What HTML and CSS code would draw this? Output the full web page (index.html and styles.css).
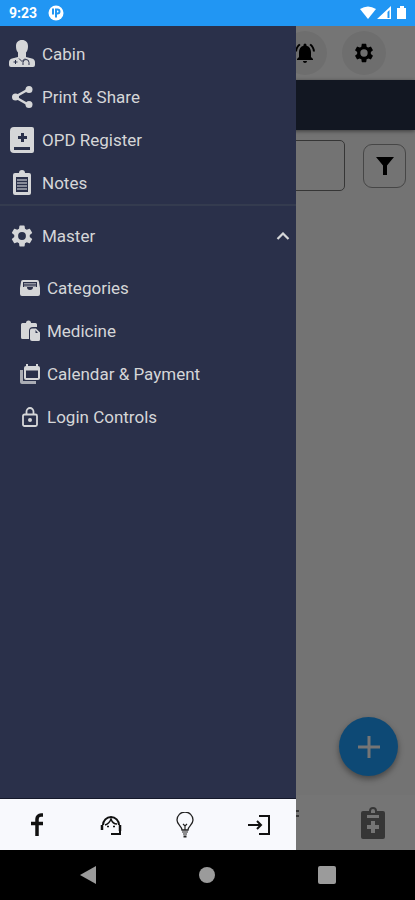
FILE: index.html
```html
<!DOCTYPE html>
<html lang="en">
<head>
<meta charset="UTF-8" />
<meta name="viewport" content="width=device-width, initial-scale=1" />
<title>Clinic Menu</title>
<link rel="stylesheet" href="styles.css">
</head>
<body>

<div class="statusbar">
  <span class="clock">9:23</span>
  <svg width="16" height="16" viewBox="0 0 16 16"><circle cx="8" cy="8" r="7.500" fill="#fff"/><path d="M5 3.500v6M8 12.500V4.500h1.500a2 2 0 0 1 0 4H8" fill="none" stroke="#2196f3" stroke-width="2"/></svg>
  <svg class="signals" width="48" height="16" viewBox="0 0 48 16" fill="#fff">
    <path d="M0 4Q8-1 16 4L8 14z"/>
    <path d="M31 1v13H17zM27.500 7v6h2V5z" fill-rule="evenodd"/>
    <path d="M40 1h4v2h2v11h-9V3h3z"/>
  </svg>
</div>

<div class="app">
  <div class="page">
    <header class="topbar">
      <button class="round" aria-label="Notifications">
        <svg width="24" height="24" viewBox="0 0 24 24"><path d="M12 22c1.100 0 2-.9 2-2h-4c0 1.100.9 2 2 2zm6-6v-5c0-3.070-1.630-5.640-4.500-6.320V4a1.500 1.500 0 0 0-3 0v.68C7.640 5.360 6 7.920 6 11v5l-2 2v1h16v-1zM7.580 4.080 6.150 2.650C3.750 4.480 2.170 7.300 2.030 10.500h2c.15-2.650 1.510-4.970 3.550-6.420zM19.970 10.500h2c-.15-3.200-1.730-6.020-4.120-7.850l-1.420 1.430c2.020 1.450 3.390 3.770 3.540 6.420z"/></svg>
      </button>
      <button class="round" aria-label="Settings">
        <svg width="22" height="22" viewBox="0 0 24 24"><path d="M19.430 12.980c.04-.32.07-.64.07-.98s-.03-.66-.07-.98l2.110-1.650c.19-.15.24-.42.12-.64l-2-3.460a.5.5 0 0 0-.61-.22l-2.490 1a7.300 7.300 0 0 0-1.690-.98l-.38-2.650A.49.490 0 0 0 14 2h-4c-.25 0-.46.18-.49.42l-.38 2.650c-.61.25-1.170.59-1.690.98l-2.490-1a.5.5 0 0 0-.61.22l-2 3.460c-.13.22-.07.49.12.64l2.110 1.650a7.900 7.900 0 0 0 0 1.960l-2.110 1.650c-.19.15-.24.42-.12.64l2 3.460c.12.22.39.3.61.22l2.490-1c.52.4 1.080.73 1.690.98l.38 2.650c.03.24.24.42.49.42h4c.25 0 .46-.18.49-.42l.38-2.650c.61-.25 1.170-.59 1.690-.98l2.490 1c.23.09.49 0 .61-.22l2-3.460a.5.5 0 0 0-.12-.64zM12 16a4 4 0 1 1 0-8 4 4 0 0 1 0 8z" fill-rule="evenodd"/></svg>
      </button>
    </header>
    <div class="band"></div>
    <div class="search-row">
      <input class="search" type="text" aria-label="Search" />
      <button class="filter" aria-label="Filter">
        <svg width="20" height="20" viewBox="0 0 20 20"><path d="M1 1h18l-7 8.500V19H8V9.500z"/></svg>
      </button>
    </div>
    <button class="fab" aria-label="Add">
      <svg width="22" height="22" viewBox="0 0 22 22"><path d="M11 0v22M0 11h22" stroke="#fff" stroke-width="3"/></svg>
    </button>
    <div class="tabs">
      <a href="#" aria-label="List">
        <svg width="24" height="32" viewBox="0 0 24 32"><path d="M0 4h24M0 9h24" stroke="#777" stroke-width="2"/></svg>
      </a>
      <a href="#" aria-label="Prescriptions">
        <svg width="24" height="32" viewBox="0 0 24 32" fill="#777"><path d="M2 4h6a4 4 0 0 1 8 0h6a2 2 0 0 1 2 2v24a2 2 0 0 1-2 2H2a2 2 0 0 1-2-2V6a2 2 0 0 1 2-2zm10-2a2 2 0 0 0-2 2v2h4V4a2 2 0 0 0-2-2zM6 8v3h12V8zm4 6v4H6v4h4v4h4v-4h4v-4h-4v-4z" fill-rule="evenodd"/></svg>
      </a>
    </div>
  </div>

  <div class="scrim"></div>

  <aside class="drawer">
    <nav class="menu">
      <a class="item" href="#">
        <svg width="26" height="28" viewBox="0 0 26 28"><path d="M13 0c3.800 0 6 2.500 6 6 0 3-.5 5-2 6.500V17l6 1.500c2 .5 3 2 3 4V25a2 2 0 0 1-2 2H2a2 2 0 0 1-2-2v-2.500c0-2 1-3.500 3-4L9 17v-4.500C7.500 11 7 9 7 6c0-3.500 2.200-6 6-6z"/><path d="M6.500 20v4M4.500 22h4M10 18.500l3 3 3-3" fill="none" stroke="#2a304a"/><path d="M14 25v-2.500a3 3 0 0 1 6 0V25" fill="none" stroke="#2a304a"/></svg>
        <span>Cabin</span>
      </a>
      <a class="item" href="#">
        <svg width="26" height="26" viewBox="0 0 26 26"><path d="M20 5 6 13l14 8" fill="none" stroke="#d5d6d8" stroke-width="2.500"/><circle cx="20" cy="5.500" r="3.500"/><circle cx="6.500" cy="13" r="3.500"/><circle cx="20" cy="20.500" r="3.500"/></svg>
        <span>Print &amp; Share</span>
      </a>
      <a class="item" href="#">
        <svg width="26" height="28" viewBox="0 0 26 28"><path d="M5 1h18a2 2 0 0 1 2 2v22a2 2 0 0 1-2 2H5a4 4 0 0 1-4-4V5a4 4 0 0 1 4-4zm7 6v3H9v3h3v3h3v-3h3v-3h-3V7zM5 21v3h16v-3z" fill-rule="evenodd"/></svg>
        <span>OPD Register</span>
      </a>
      <a class="item" href="#">
        <svg width="26" height="26" viewBox="0 0 26 26"><path d="M6 3h4a3 3 0 0 1 6 0h4a2 2 0 0 1 2 2v18a2 2 0 0 1-2 2H6a2 2 0 0 1-2-2V5a2 2 0 0 1 2-2zm1 4v15h12V7z" fill-rule="evenodd"/><path d="M8 10h10M8 13h10M8 16h10M8 19h10" stroke="#a8abb5" stroke-width="1.500"/></svg>
        <span>Notes</span>
      </a>
    </nav>
    <button class="item master" aria-expanded="true">
      <svg width="26" height="26" viewBox="0 0 24 24"><path d="M19.140 12.940c.04-.3.06-.61.06-.94s-.02-.64-.07-.94l2.030-1.580a.49.490 0 0 0 .12-.61l-1.920-3.320a.49.490 0 0 0-.59-.22l-2.390.96a7 7 0 0 0-1.620-.94l-.36-2.540a.48.480 0 0 0-.48-.41h-3.840a.48.480 0 0 0-.48.410l-.36 2.540c-.59.24-1.130.57-1.620.94l-2.390-.96a.48.480 0 0 0-.59.220L2.740 8.870a.48.480 0 0 0 .12.610l2.030 1.580a6 6 0 0 0 0 1.880l-2.030 1.580a.49.490 0 0 0-.12.610l1.920 3.320c.12.22.37.29.59.22l2.390-.96c.5.38 1.030.7 1.620.94l.36 2.540c.05.24.24.41.48.41h3.840c.24 0 .44-.17.47-.41l.36-2.540c.59-.24 1.130-.56 1.620-.94l2.390.96c.22.08.47 0 .59-.22l1.920-3.320a.48.480 0 0 0-.12-.61zM12 15.600a3.600 3.600 0 1 1 0-7.200 3.600 3.600 0 0 1 0 7.200z" fill-rule="evenodd"/></svg>
      <span>Master</span>
      <svg class="chevron" width="14" height="8" viewBox="0 0 14 8"><path d="m1.500 7L7 1.500 12.500 7" fill="none" stroke="#d5d6d8" stroke-width="2.200"/></svg>
    </button>
    <nav class="submenu">
      <a class="item" href="#">
        <svg width="22" height="22" viewBox="0 0 22 22"><path d="M4 3h14a2 2 0 0 1 2 2l1 6v6a2 2 0 0 1-2 2H3a2 2 0 0 1-2-2v-6l1-6a2 2 0 0 1 2-2zm0 2v5h4a3 3 0 0 0 6 0h4V5z" fill-rule="evenodd"/><path d="M5 6h12v1.500H5zM5 8.500h12V10H5z" opacity=".6"/></svg>
        <span>Categories</span>
      </a>
      <a class="item" href="#">
        <svg width="22" height="22" viewBox="0 0 22 22"><path d="M3.500 3H7a2.500 2.500 0 0 1 5 0h4.500A1.500 1.500 0 0 1 18 4.500V7h-4a4 4 0 0 0-4 4v8H3.500A1.500 1.500 0 0 1 2 17.500v-13A1.500 1.500 0 0 1 3.500 3z"/><path d="M13 8.500h4l4 4v7a1.500 1.500 0 0 1-1.500 1.500H13a2 2 0 0 1-2-2v-8.500a2 2 0 0 1 2-2zm3.500 1.500v3H19z" fill-rule="evenodd"/></svg>
        <span>Medicine</span>
      </a>
      <a class="item" href="#">
        <svg width="22" height="22" viewBox="0 0 22 22"><path d="M7 1h2v2h8V1h2v2a2 2 0 0 1 2 2v10a2 2 0 0 1-2 2H7a2 2 0 0 1-2-2V5a2 2 0 0 1 2-2zm0 6.500V15h12V7.500z" fill-rule="evenodd"/><path d="M1 7h3v11h13v3H3a2 2 0 0 1-2-2z" opacity=".75"/></svg>
        <span>Calendar &amp; Payment</span>
      </a>
      <a class="item" href="#">
        <svg width="22" height="22" viewBox="0 0 22 22"><path d="M5.500 8.500h11a1.500 1.500 0 0 1 1.500 1.500v8.500a1.500 1.500 0 0 1-1.500 1.500h-11A1.500 1.500 0 0 1 4 18.500V10a1.500 1.500 0 0 1 1.500-1.500zM7.500 8.500V5.500a3.500 3.500 0 0 1 7 0v3" fill="none" stroke="#d5d6d8" stroke-width="1.800"/><circle cx="11" cy="14" r="2"/></svg>
        <span>Login Controls</span>
      </a>
    </nav>
    <footer class="links">
      <a href="#" aria-label="Facebook">
        <svg width="14" height="24" viewBox="0 0 14 24"><path d="M7 23V6a4 4 0 0 1 4-4h2M1 10.500h12" fill="none" stroke="#111" stroke-width="3.500"/></svg>
      </a>
      <a href="#" aria-label="Support">
        <svg width="22" height="22" viewBox="0 0 22 22" fill="none" stroke="#111"><path d="M3 11a8 8 0 0 1 16 0" stroke-width="2"/><path d="M2 11v5M20 11v6" stroke-width="2.500"/><path d="M20 16v4h-9" stroke-width="2"/><path d="M5 11c3-1 5-3 6-6 1 3 3 5 6 5" stroke-width="1.500"/><path d="M7 12.500h2M13 12.500h2" stroke-width="1.500"/></svg>
      </a>
      <a href="#" aria-label="Tips">
        <svg width="18" height="26" viewBox="0 0 18 26" fill="none" stroke="#222"><path d="M6 18c0-4-5-5-5-10a8 8 0 0 1 16 0c0 5-5 6-5 10z" stroke-width="1.300"/><path d="m7 12 2 2 2-2M9 14v4M6 20h6M7 22h4" stroke-width="1.200"/><path d="M7.500 24.500h3" stroke-width="2"/></svg>
      </a>
      <a href="#" aria-label="Log out">
        <svg width="22" height="22" viewBox="0 0 22 22" fill="none" stroke="#111" stroke-width="2"><path d="M11 2h10v18H11M0 11h13M9 7l4 4-4 4"/></svg>
      </a>
    </footer>
  </aside>
</div>

<div class="navbar">
  <button aria-label="Back"><svg width="16" height="18" viewBox="0 0 16 18"><path d="M16 0v18L0 9z"/></svg></button>
  <button aria-label="Home"><svg width="16" height="16" viewBox="0 0 16 16"><circle cx="8" cy="8" r="8"/></svg></button>
  <button aria-label="Recent apps"><svg width="18" height="18" viewBox="0 0 18 18"><rect width="18" height="18" rx="2"/></svg></button>
</div>

</body>
</html>
```
FILE: styles.css
```css
* { box-sizing: border-box; }
body { margin: 0; height: 100vh; display: flex; flex-direction: column; font-family: Roboto, sans-serif; background: #000; }
svg { display: block; flex: none; }
button { border: 0; padding: 0; background: none; font: inherit; cursor: pointer; }
a { color: inherit; text-decoration: none; }

.statusbar { height: 26px; flex: none; display: flex; align-items: center; gap: 11px; padding: 0 7px 0 9px; background: #2196f3; color: #fff; }
.clock { font-size: 14px; font-weight: 700; }
.signals { margin-left: auto; }

.app { position: relative; flex: 1; min-height: 0; display: flex; }

/* page behind the drawer */
.page { flex: 1; display: flex; flex-direction: column; background: #fafafa; }
.topbar { height: 54px; display: flex; align-items: center; justify-content: flex-end; gap: 15px; padding-right: 29px; background: #fff; }
.round { width: 44px; height: 44px; display: grid; place-items: center; border-radius: 50%; background: #f0f0f0; }
.band { height: 50px; background: #28324a; box-shadow: 0 1px 4px rgba(0,0,0,.5); }
.search-row { display: flex; align-items: center; gap: 18px; padding: 10px 9px 0 10px; }
.search { flex: 1; min-width: 0; height: 51px; border: 1px solid #777; border-radius: 5px; background: transparent; }
.filter { width: 43px; height: 44px; display: grid; place-items: center; border: 1px solid #999; border-radius: 9px; }
.fab { width: 59px; height: 59px; margin: auto 17px 19px auto; display: grid; place-items: center; border-radius: 50%; background: #1ea0ff; box-shadow: 0 3px 6px rgba(0,0,0,.4); }
.tabs { height: 55px; display: flex; align-items: center; justify-content: flex-end; gap: 62px; padding-right: 30px; background: #fff; }

.scrim { position: absolute; inset: 0; background: rgba(0,0,0,.54); }

.drawer { position: absolute; top: 0; bottom: 0; left: 0; width: 296px; display: flex; flex-direction: column; background: #2a304a; color: #d5d6d8; fill: #d5d6d8; }
.menu { padding-top: 6px; border-bottom: 2px solid #343b4f; }
.item { height: 43px; display: flex; align-items: center; gap: 7px; padding: 0 6px 0 9px; font-size: 17px; color: #d5d6d8; }
.master { width: 100%; height: 60px; fill: #d5d6d8; }
.chevron { margin-left: auto; }
.submenu .item { gap: 6px; padding-left: 19px; }
.links { height: 52px; margin-top: auto; display: grid; grid-template-columns: repeat(4, 1fr); border-top: 1px solid #14182a; background: #f8f9fd; fill: #111; }
.links a { display: grid; place-items: center; }

.navbar { height: 50px; flex: none; display: flex; justify-content: space-around; padding: 0 28px; }
.navbar button { width: 60px; display: grid; place-items: center; fill: #9b9b9b; }
```
